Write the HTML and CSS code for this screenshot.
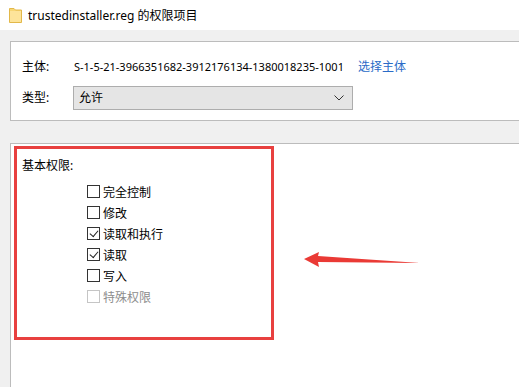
FILE: index.html
```html
<!DOCTYPE html>
<html lang="zh-CN">
<head>
    <meta charset="UTF-8">
    <title>trustedinstaller.reg 的权限项目</title>
    <link rel="stylesheet" href="styles.css">
</head>
<body>
    <div class="titlebar">
        <svg class="folder" width="13" height="16" viewBox="0 0 13 16">
            <path d="M0.5 1.5 H5 L6.5 3 H12.5 V15.5 H0.5 Z" fill="#f8d775" stroke="#e2b84a" stroke-width="1"/>
            <path d="M1 4 H12 V15 H1 Z" fill="#fde49a"/>
        </svg>
        <span class="title">trustedinstaller.reg 的权限项目</span>
    </div>

    <div class="main">
        <div class="panel top">
            <div class="row">
                <span class="label">主体:</span>
                <span class="sid">S-1-5-21-3966351682-3912176134-1380018235-1001</span>
                <a class="link">选择主体</a>
            </div>
            <div class="row">
                <span class="label">类型:</span>
                <div class="select">
                    <span>允许</span>
                    <svg width="10" height="6" viewBox="0 0 10 6">
                        <path d="M0.5 0.5 L5 5 L9.5 0.5" fill="none" stroke="#333" stroke-width="1"/>
                    </svg>
                </div>
            </div>
        </div>

        <div class="panel perm">
            <div class="marked">
                <div class="heading">基本权限:</div>
                <ul class="checks">
                    <li><span class="box"></span>完全控制</li>
                    <li><span class="box"></span>修改</li>
                    <li><span class="box checked"></span>读取和执行</li>
                    <li><span class="box checked"></span>读取</li>
                    <li><span class="box"></span>写入</li>
                    <li class="disabled"><span class="box"></span>特殊权限</li>
                </ul>
            </div>
        </div>
    </div>

    <svg class="arrow" width="120" height="20" viewBox="0 0 120 20">
        <path d="M0 7 L15 0 L14 4 L116 11 L14 10 L15 15 Z" fill="#ea3a35"/>
    </svg>
</body>
</html>
```

FILE: styles.css
```css
body {
    margin: 0;
    padding: 0;
    background-color: #f0f0f0;
    font-family: "Noto Sans", "Noto Sans CJK SC", sans-serif;
    font-size: 12px;
    color: #000;
    height: 387px;
    overflow: hidden;
}

.titlebar {
    height: 30px;
    background: white;
    display: flex;
    align-items: center;
    padding-left: 9px;
    gap: 6px;
}

.folder {
    margin-top: -1px;
}

.title {
    font-size: 12px;
    color: #000;
}

.main {
    padding: 11px 0 0 10px;
    display: flex;
    flex-direction: column;
    gap: 22px;
}

.panel {
    background: white;
    border: 1px solid #bcbcbc;
    border-right: none;
}

.panel.top {
    padding: 15px 0 0 11px;
    box-sizing: border-box;
    height: 80px;
    display: flex;
    flex-direction: column;
    gap: 9px;
}

.row {
    display: flex;
    align-items: center;
    line-height: 20px;
}

.label {
    width: 51px;
}

.sid {
    font-size: 11px;
    margin-left: 1px;
}

.link {
    color: #2a6bc7;
    margin-left: 14px;
}

.select {
    width: 280px;
    height: 24px;
    box-sizing: border-box;
    background: #e5e5e5;
    border: 1px solid #adadad;
    display: flex;
    align-items: center;
    justify-content: space-between;
    padding: 0 8px 0 5px;
}

.panel.perm {
    height: 260px;
    border-bottom: none;
    padding: 2px 0 0 3px;
}

.marked {
    width: 260px;
    height: 194px;
    box-sizing: border-box;
    border: 3px solid #e8403f;
    padding: 7px 0 0 5px;
}

.heading {
    line-height: 20px;
}

.checks {
    list-style: none;
    margin: 5px 0 0 0;
    padding: 0 0 0 65px;
}

.checks li {
    display: flex;
    align-items: center;
    height: 21px;
    gap: 3px;
}

.box {
    width: 13px;
    height: 13px;
    box-sizing: border-box;
    border: 1px solid #333;
    background: white;
    position: relative;
}

.box.checked::after {
    content: "";
    position: absolute;
    left: 2px;
    top: 0px;
    width: 7px;
    height: 4px;
    border-left: 1px solid #222;
    border-bottom: 1px solid #222;
    transform: translate(0, 2px) rotate(-50deg);
    transform-origin: center;
}

.disabled {
    color: #8d8d8d;
}

.disabled .box {
    border-color: #c5c5c5;
}

.arrow {
    position: absolute;
    left: 304px;
    top: 252px;
}
```
